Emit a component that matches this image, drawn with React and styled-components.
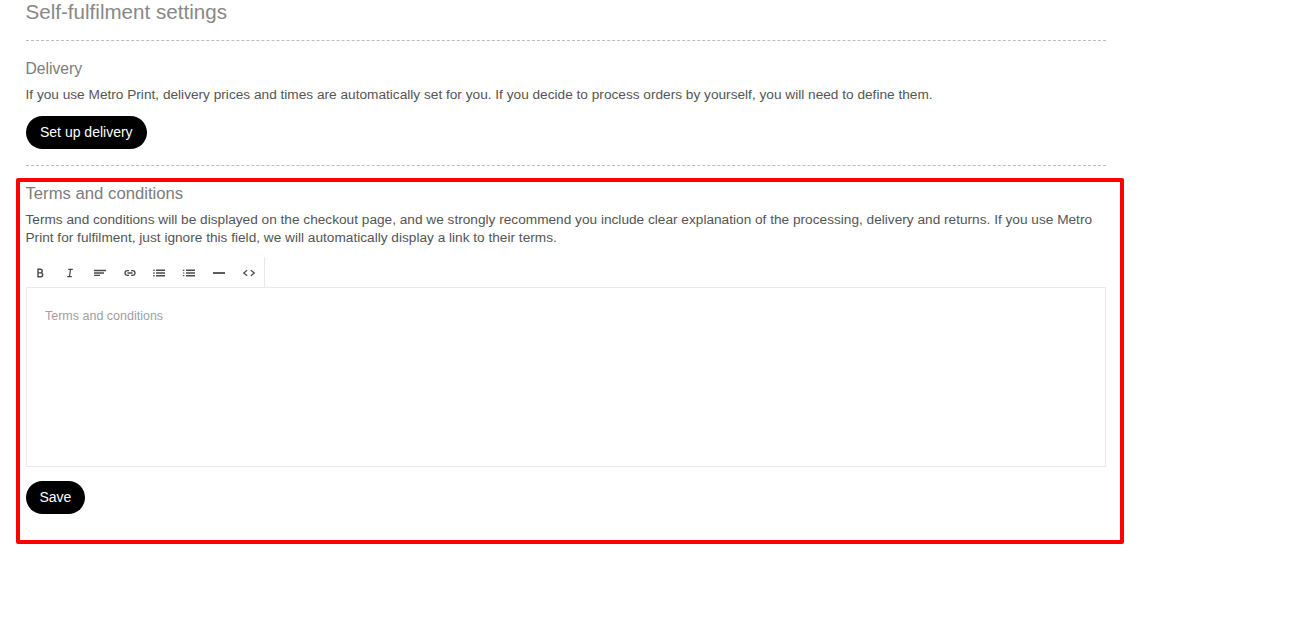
import React from "react";
import styled, { createGlobalStyle } from "styled-components";

const Global = createGlobalStyle`
  html, body { margin: 0; padding: 0; background: #fff; }
  body { font-family: "Liberation Sans", Arial, sans-serif; overflow: hidden; }
`;
const Page = styled.main`
  width: 1080px;
  height: 618px;
  box-sizing: border-box;
  margin-left: 26px;
`;
const Title = styled.h1`
  margin: 0 0 0 -0.5px;
  height: 40px;
  font-size: 20.6px;
  line-height: 23px;
  font-weight: 400;
  color: #888;
`;
const Divider = styled.hr`
  margin: 0;
  border: 0;
  border-top: 1px dashed #bdbdbd;
`;
const Section = styled.section`
  position: relative;
  padding-top: ${(p) => p.$top}px;
`;
const Heading = styled.h2`
  margin: 0 0 ${(p) => p.$gap}px -0.5px;
  font-size: ${(p) => p.$size}px;
  line-height: ${(p) => p.$lh}px;
  font-weight: 400;
  color: #7c7c7c;
`;
const Text = styled.p`
  margin: 0 0 0 -0.5px;
  font-size: 13.67px;
  line-height: 18px;
  color: #555;
`;
const Button = styled.button`
  display: block;
  height: 33px;
  padding: 0 ${(p) => p.$pad}px 1px;
  border: 0;
  border-radius: 17px;
  background: #000;
  color: #fff;
  font: 14px "Liberation Sans", Arial, sans-serif;
`;
const DeliveryAction = styled.div`
  padding: 12px 0 16px;
`;
const Highlight = styled.div`
  position: absolute;
  left: -10px;
  top: 12px;
  width: 1108px;
  height: 366px;
  box-sizing: border-box;
  border: 4px solid #f00;
  border-radius: 2px;
  pointer-events: none;
`;
const Toolbar = styled.div`
  display: flex;
  width: 239px;
  height: 30px;
  margin: 10px 0 0 -0.5px;
  box-sizing: border-box;
  border-right: 1px solid #e8e8e8;
`;
const Tool = styled.span`
  width: 29.8px;
  padding-top: 2px;
  display: flex;
  align-items: center;
  justify-content: center;
`;
const Editor = styled.div`
  height: 180px;
  box-sizing: border-box;
  border: 1px solid #eaeaea;
  padding: 20px 18px;
  font-size: 12.5px;
  line-height: 16px;
  color: #a0a0a0;
`;
const SaveAction = styled.div`
  padding-top: 14px;
`;
const Icon = ({ children }) => (
  <svg width="14" height="14" viewBox="0 0 14 14" fill="none" stroke="#4a4a4a" strokeWidth="1.2">
    {children}
  </svg>
);
const tools = [
  <path d="M5 3.3h2.4a1.7 1.7 0 0 1 0 3.6H5zM5 6.9h2.8a1.9 1.9 0 0 1 0 3.8H5z" strokeWidth="1.4" />,
  <path d="M5.2 3.3h4.6M4.2 10.7h4.6M7.6 3.3l-1.2 7.4" />,
  <path d="M1 4.5h12M1 7h10M1 9.3h6" strokeWidth="1.3" />,
  <path d="M6 4.6H4.4a2.4 2.4 0 0 0 0 4.8H6M8 4.6h1.6a2.4 2.4 0 0 1 0 4.8H8M4.5 7h5" strokeWidth="1.3" />,
  <path d="M1.2 4.3h1.4M1.2 7h1.4M1.2 9.7h1.4M4 4.3h9M4 7h9M4 9.7h9" strokeWidth="1.5" />,
  <path d="M1.6 3.7v1.2M1.6 6.4v1.2M1.6 9.1v1.2M4 4.3h9M4 7h9M4 9.7h9" strokeWidth="1.5" />,
  <path d="M1 7h12" strokeWidth="1.8" />,
  <path d="M5.2 4.3L1.7 7l3.5 2.7M8.8 4.3L12.3 7 8.8 9.7" />,
];

export default function App() {
  return (
    <>
      <Global />
      <Page>
        <Title>Self-fulfilment settings</Title>
        <Divider />
        <Section $top={18}>
          <Heading $size={15.7} $lh={20} $gap={7}>Delivery</Heading>
          <Text>
            If you use Metro Print, delivery prices and times are automatically set for you. If you decide to process orders by yourself, you will need to define them.
          </Text>
          <DeliveryAction>
            <Button $pad={14}>Set up delivery</Button>
          </DeliveryAction>
        </Section>
        <Divider />
        <Section $top={17}>
          <Highlight />
          <Heading $size={16.7} $lh={22} $gap={6}>Terms and conditions</Heading>
          <Text>
            Terms and conditions will be displayed on the checkout page, and we strongly recommend you include clear explanation of the processing, delivery and returns. If you use Metro Print for fulfilment, just ignore this field, we will automatically display a link to their terms.
          </Text>
          <Toolbar>
            {tools.map((t, i) => (
              <Tool key={i}>
                <Icon>{t}</Icon>
              </Tool>
            ))}
          </Toolbar>
          <Editor>Terms and conditions</Editor>
          <SaveAction>
            <Button $pad={13.5}>Save</Button>
          </SaveAction>
        </Section>
      </Page>
    </>
  );
}
